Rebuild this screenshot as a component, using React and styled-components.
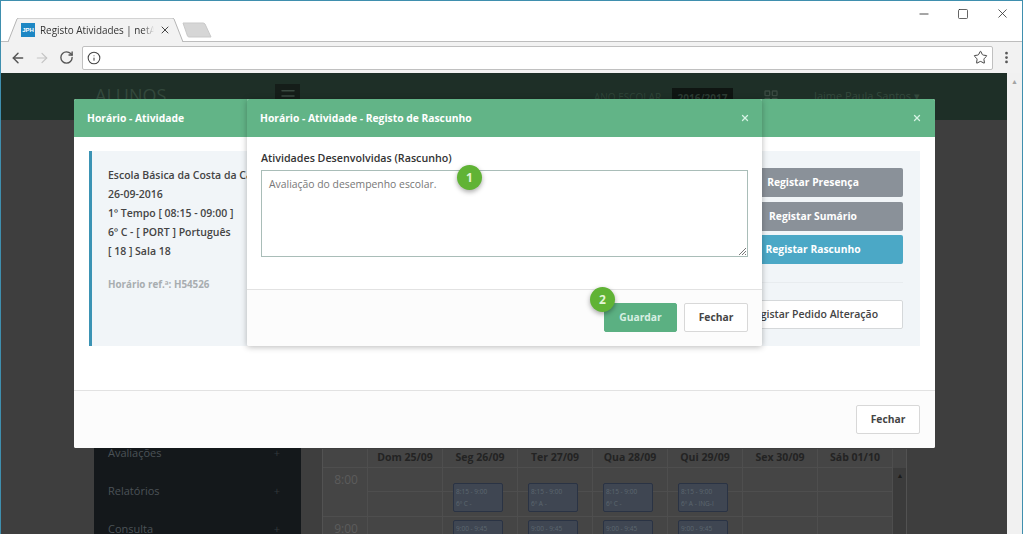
import React from "react";
import styled, { createGlobalStyle } from "styled-components";
import { ArrowLeft, ArrowRight, RotateCw, Info, Star, EllipsisVertical, Minus, Square, X, Menu, LayoutGrid } from "lucide-react";

const Global = createGlobalStyle`
  html, body { margin: 0; padding: 0; overflow: hidden; background: #fff; }
  * { box-sizing: border-box; }
  body { font-family: "Open Sans", "Liberation Sans", sans-serif; }
`;

const Win = styled.div`
  position: relative; width: 1023px; height: 534px; overflow: hidden;
  border: 1px solid #3f8fae; border-bottom: 0; background: #fff;
  display: flex; flex-direction: column;
`;
const TabStrip = styled.div`
  height: 40px; flex: none; background: #fff; display: flex; align-items: flex-end; padding-left: 7px; position: relative;
`;
const Tab = styled.div`
  position: relative; width: 176px; height: 24px; display: flex; align-items: center; padding-left: 13px;
  font-size: 9.900px; color: #333; margin-bottom: -1px; z-index: 1;
`;
const TabShape = styled.svg`position: absolute; inset: 0;`;
const Favicon = styled.span`
  position: relative; width: 14px; height: 14px; background: #1d87c4; color: #fff; font: 700 6px "Liberation Sans", sans-serif;
  display: flex; align-items: center; justify-content: center; margin-right: 5px;
`;
const TabTitle = styled.span`
  position: relative; width: 114px; white-space: nowrap;
  -webkit-mask-image: linear-gradient(to right, #000 90%, transparent);
  mask-image: linear-gradient(to right, #000 90%, transparent);
`;
const TabClose = styled(X)`position: relative; margin-left: 5px; color: #444;`;
const NewTab = styled.svg`margin: 0 0 3px -2px; position: relative; z-index: 0;`;
const WinControls = styled.div`
  position: absolute; top: 5px; right: 12px; display: flex; gap: 26px; color: #333; align-items: center;
`;
const Toolbar = styled.div`
  height: 32px; flex: none; background: #f2f2f2; border-top: 1px solid #bdbdbd; display: flex; align-items: center; padding: 0 8px 0 9px;
`;
const NavIcon = styled.span`
  display: flex; width: 24.300px; color: ${p => p.$dim ? "#c4c4c4" : "#555"};
`;
const Address = styled.div`
  width: 911px; height: 24px; margin-left: -1px; background: #fff; border: 1px solid #c0c0c0; border-radius: 2px;
  display: flex; align-items: center; justify-content: space-between; padding: 0 4px; color: #444;
`;
const Dots = styled.span`display: flex; margin-left: 6px; color: #555;`;

const Page = styled.div`flex: 1; background: #3e3e3e; display: flex; min-height: 0;`;
const PageMain = styled.div`flex: 1; display: flex; flex-direction: column; min-width: 0;`;
const Topbar = styled.div`
  height: 47px; flex: none; background: #1e2f27; display: flex; align-items: flex-start; padding: 11px 0 0 94px;
`;
const Brand = styled.div`width: 180px; font-size: 18px; line-height: 22px; color: #33483c; font-weight: 400;`;
const Burger = styled.div`
  width: 25px; height: 30px; background: #151d19; color: #3a4a41; display: flex; justify-content: center; padding-top: 3px;
`;
const SchoolLabel = styled.div`margin: 6px 0 0 294px; width: 78px; font-size: 10px; color: #2f4438; white-space: nowrap;`;
const Year = styled.div`
  width: 61px; height: 28px; background: #0f1512; color: #2c3b33; font-size: 10px; font-weight: 700; text-align: center; padding-top: 3px; margin-top: 4px;
`;
const Apps = styled.div`margin: 5px 0 0 30px; color: #3a4a41; display: flex;`;
const UserName = styled.div`margin: 4px 0 0 35px; font-size: 11px; color: #33483c; white-space: nowrap;`;

const Lower = styled.div`flex: 1; display: flex; padding-left: 93px; min-height: 0; overflow: hidden;`;
const Sidebar = styled.nav`
  width: 207px; background: #14181b; padding: 325px 21px 0 14px; display: flex; flex-direction: column; gap: 22px;
`;
const SideItem = styled.div`
  display: flex; justify-content: space-between; font-size: 11px; line-height: 16px; color: #4b5257; flex: none;
`;
const Plus = styled.span`color: #33383c;`;
const Calendar = styled.div`
  margin: 329px 0 0 21px; width: 585px; flex: none; background: #454545; border: 1px solid #525252; border-width: 0 1px 0 1px;
  display: grid; grid-template-columns: 45px repeat(7, 75px) 14px; grid-template-rows: 19px 49px 49px; position: relative; overflow: hidden; align-content: start;
`;
const DayHead = styled.div`
  font-size: 10.500px; font-weight: 700; color: #232323; text-align: center; line-height: 16px; border-right: 1px solid #4e4e4e; border-bottom: 1px solid #4e4e4e; white-space: nowrap;
`;
const TimeCell = styled.div`
  font-size: 12px; color: #5c5c5c; text-align: center; padding: 3px 0 0 2px; border-right: 1px solid #4e4e4e; border-bottom: 1px solid #4e4e4e;
`;
const Slot = styled.div`
  border-right: 1px solid #4e4e4e; border-bottom: 1px solid #4e4e4e; padding: ${p => p.$second ? "3px" : "15px"} 0 0 10px;
  background: linear-gradient(#0000 23px, #4e4e4e 23px, #4e4e4e 24px, #0000 24px);
`;
const Event = styled.div`
  width: 50px; height: 29px; background: #3f4652; border: 1px solid #2a3344; border-radius: 2px; color: #5d6670; font-size: 6.5px; line-height: 12px; padding: 2px; overflow: hidden; white-space: nowrap;
`;
const ScrollCol = styled.div`background: ${p => p.$head ? "transparent" : "#3b3b3b"}; display: flex; justify-content: center; color: #1c1c1c; font-size: 7px; padding-top: 3px; line-height: 10px;`;

const Scrollbar = styled.div`
  width: 15px; flex: none; background: #f1f1f1; color: #a3a3a3; font-size: 7px; text-align: center; padding-top: 4px;
`;

const ModalBox = styled.section`
  position: absolute; background: #fff; display: flex; flex-direction: column;
  left: ${p => p.$left}px; width: ${p => p.$width}px; top: 98px; height: ${p => p.$height}px;
  border-radius: 2px; overflow: hidden;
  box-shadow: ${p => p.$raised ? "0 1px 6px rgba(0,0,0,.28)" : "none"};
`;
const ModalHead = styled.header`
  height: 38px; flex: none; background: #62b487; color: #fff; display: flex; align-items: center; justify-content: space-between;
  padding: 0 ${p => p.$right}px 1px 13px; font-size: 10.300px; font-weight: 700;
`;
const CloseX = styled(X)`color: #d6f3e4;`;
const BigBody = styled.div`flex: 1; padding: 14px 15px 44px 15px; min-height: 0;`;
const InfoPanel = styled.div`
  height: 195px; background: #f1f5f8; border-left: 3px solid #3b93b4; display: flex; justify-content: space-between; padding: 17px 17px 0 16px;
`;
const Details = styled.div`font-size: 10.500px; font-weight: 600; color: #444; line-height: 19px; margin-top: -2px;`;
const Line = styled.div`white-space: nowrap;`;
const Ref = styled.div`margin-top: 14px; font-size: 9.800px; font-weight: 700; color: #a8adb0;`;
const Actions = styled.div`width: 180px; display: flex; flex-direction: column; gap: 4.500px;`;
const ActionBtn = styled.div`
  height: 29px; border-radius: 2px; color: #fff; font-size: 10.300px; font-weight: 700; text-align: center; line-height: 28px;
  background: ${p => p.$info ? "#4ba8c6" : "#8a9199"}; flex: none;
`;
const Rule = styled.div`height: 1px; background: #e8ecef; margin: 13px 0;`;
const OutlineAction = styled.div`
  height: 29px; background: #fff; border: 1px solid #d5d8da; border-radius: 2px; color: #444; font-size: 10.500px; font-weight: 600; text-align: center; line-height: 26px; white-space: nowrap;
`;
const Foot = styled.footer`
  height: ${p => p.$h}px; flex: none; background: #fcfcfc; border-top: 1px solid #e2e2e2; display: flex; justify-content: flex-end; align-items: flex-start; gap: 7px;
  padding: ${p => p.$pad}px ${p => p.$right}px 0 0;
`;
const FootBtn = styled.div`
  position: relative; height: 29px; width: ${p => p.$w}px; border-radius: 2px; font-size: 10.300px; font-weight: 700; text-align: center; line-height: 27px;
  background: ${p => p.$primary ? "#5bb082" : "#fff"}; color: ${p => p.$primary ? "#d7efe2" : "#444"};
  border: 1px solid ${p => p.$primary ? "#5bb082" : "#d8d8d8"};
`;
const DraftBody = styled.div`flex: 1; padding: 13px 14px 0 14px; position: relative;`;
const Label = styled.div`font-size: 10.700px; font-weight: 600; color: #333; line-height: 16px; margin-bottom: 4px;`;
const TextArea = styled.div`
  position: relative; height: 87px; border: 1px solid #a9bdb8; background: #fff; padding: 3px 7px; font-size: 10.400px; color: #777; line-height: 20px;
`;
const Grip = styled.svg`position: absolute; right: 0; bottom: 0;`;
const Badge = styled.div`
  position: absolute; width: 25px; height: 25px; border-radius: 50%; background: #60b335; color: #e4f5d6; font-size: 12px; font-weight: 700;
  display: flex; align-items: center; justify-content: center; box-shadow: 0 2px 5px rgba(0,0,0,.35); z-index: 2;
  top: ${p => p.$top}px; left: ${p => p.$left}px;
`;

const days = ["Dom 25/09", "Seg 26/09", "Ter 27/09", "Qua 28/09", "Qui 29/09", "Sex 30/09", "Sáb 01/10"];
const rows = [
  { time: "8:00", ev: [null, ["8:15 - 9:00", "6º C -"], ["8:15 - 9:00", "6º A -"], ["8:15 - 9:00", "6º C -"], ["8:15 - 9:00", "6º A - ING-I"], null, null] },
  { time: "9:00", ev: [null, ["9:00 - 9:45", ""], ["9:00 - 9:45", ""], ["9:00 - 9:45", ""], ["9:00 - 9:45", ""], null, null], second: true },
];

export default function App() {
  return (
    <>
      <Global />
      <Win>
        <TabStrip>
          <Tab>
            <TabShape width="176" height="24" viewBox="0 0 176 24">
              <path d="M0 24 L9 1 Q9.5 0 11 0 L164 0 Q165.500 0 166 1 L175 24" fill="#f2f2f2" stroke="#b4b4b4" />
            </TabShape>
            <Favicon>JPH</Favicon>
            <TabTitle>Registo Atividades | netA</TabTitle>
            <TabClose size={12} strokeWidth={2} />
          </Tab>
          <NewTab width="30" height="16" viewBox="0 0 30 16">
            <path d="M1 1 L21 1 Q22 1 23 2 L29 15 L7 15 Q6 15 5.500 14 Z" fill="#d6d6d6" stroke="#c9c9c9" />
          </NewTab>
          <WinControls>
            <Minus size={14} strokeWidth={1.5} />
            <Square size={12} strokeWidth={1.5} />
            <X size={15} strokeWidth={1.3} />
          </WinControls>
        </TabStrip>
        <Toolbar>
          <NavIcon><ArrowLeft size={16} strokeWidth={2.2} /></NavIcon>
          <NavIcon $dim><ArrowRight size={16} strokeWidth={1.8} /></NavIcon>
          <NavIcon><RotateCw size={15} strokeWidth={2.2} /></NavIcon>
          <Address>
            <Info size={14} strokeWidth={1.8} />
            <Star size={15} strokeWidth={1.6} />
          </Address>
          <Dots><EllipsisVertical size={15} strokeWidth={2.4} /></Dots>
        </Toolbar>
        <Page>
          <PageMain>
            <Topbar>
              <Brand>ALUNOS</Brand>
              <Burger><Menu size={18} /></Burger>
              <SchoolLabel>ANO ESCOLAR</SchoolLabel>
              <Year>2016/2017</Year>
              <Apps><LayoutGrid size={16} /></Apps>
              <UserName>Jaime Paula Santos ▾</UserName>
            </Topbar>
            <Lower>
              <Sidebar>
                <SideItem>Avaliações<Plus>+</Plus></SideItem>
                <SideItem>Relatórios<Plus>+</Plus></SideItem>
                <SideItem>Consulta<Plus>+</Plus></SideItem>
              </Sidebar>
              <Calendar>
                <DayHead />
                {days.map(d => <DayHead key={d}>{d}</DayHead>)}
                <ScrollCol $head />
                {rows.map(r => (
                  <React.Fragment key={r.time}>
                    <TimeCell>{r.time}</TimeCell>
                    {r.ev.map((e, i) => (
                      <Slot key={i} $second={r.second}>
                        {e && <Event>{e[0]}<br />{e[1]}</Event>}
                      </Slot>
                    ))}
                    <ScrollCol>{r.second ? "" : "▲"}</ScrollCol>
                  </React.Fragment>
                ))}
              </Calendar>
            </Lower>
          </PageMain>
          <Scrollbar>▲</Scrollbar>
        </Page>

        <ModalBox $left={73} $width={861} $height={349}>
          <ModalHead $right={13}>Horário - Atividade<CloseX size={10} strokeWidth={3} /></ModalHead>
          <BigBody>
            <InfoPanel>
              <Details>
                <Line>Escola Básica da Costa da Caparica</Line>
                <Line>26-09-2016</Line>
                <Line>1º Tempo [ 08:15 - 09:00 ]</Line>
                <Line>6º C - [ PORT ] Português</Line>
                <Line>[ 18 ] Sala 18</Line>
                <Ref>Horário ref.ª: H54526</Ref>
              </Details>
              <Actions>
                <ActionBtn>Registar Presença</ActionBtn>
                <ActionBtn>Registar Sumário</ActionBtn>
                <ActionBtn $info>Registar Rascunho</ActionBtn>
                <Rule />
                <OutlineAction>Registar Pedido Alteração</OutlineAction>
              </Actions>
            </InfoPanel>
          </BigBody>
          <Foot $h={58} $pad={14} $right={15}>
            <FootBtn $w={64}>Fechar</FootBtn>
          </Foot>
        </ModalBox>

        <ModalBox $left={246} $width={515} $height={247} $raised>
          <ModalHead $right={12}>Horário - Atividade - Registo de Rascunho<CloseX size={10} strokeWidth={3} /></ModalHead>
          <DraftBody>
            <Label>Atividades Desenvolvidas (Rascunho)</Label>
            <TextArea>
              Avaliação do desempenho escolar.
              <Grip width="9" height="9" viewBox="0 0 9 9">
                <path d="M8 1 L1 8 M8 4 L4 8 M8 7 L7 8" stroke="#777" strokeWidth="1" />
              </Grip>
            </TextArea>
            <Badge $left={210} $top={28}>1</Badge>
          </DraftBody>
          <Foot $h={57} $pad={13} $right={14}>
            <FootBtn $primary $w={73}>
              Guardar
              <Badge $left={-15} $top={-17}>2</Badge>
            </FootBtn>
            <FootBtn $w={64}>Fechar</FootBtn>
          </Foot>
        </ModalBox>
      </Win>
    </>
  );
}
